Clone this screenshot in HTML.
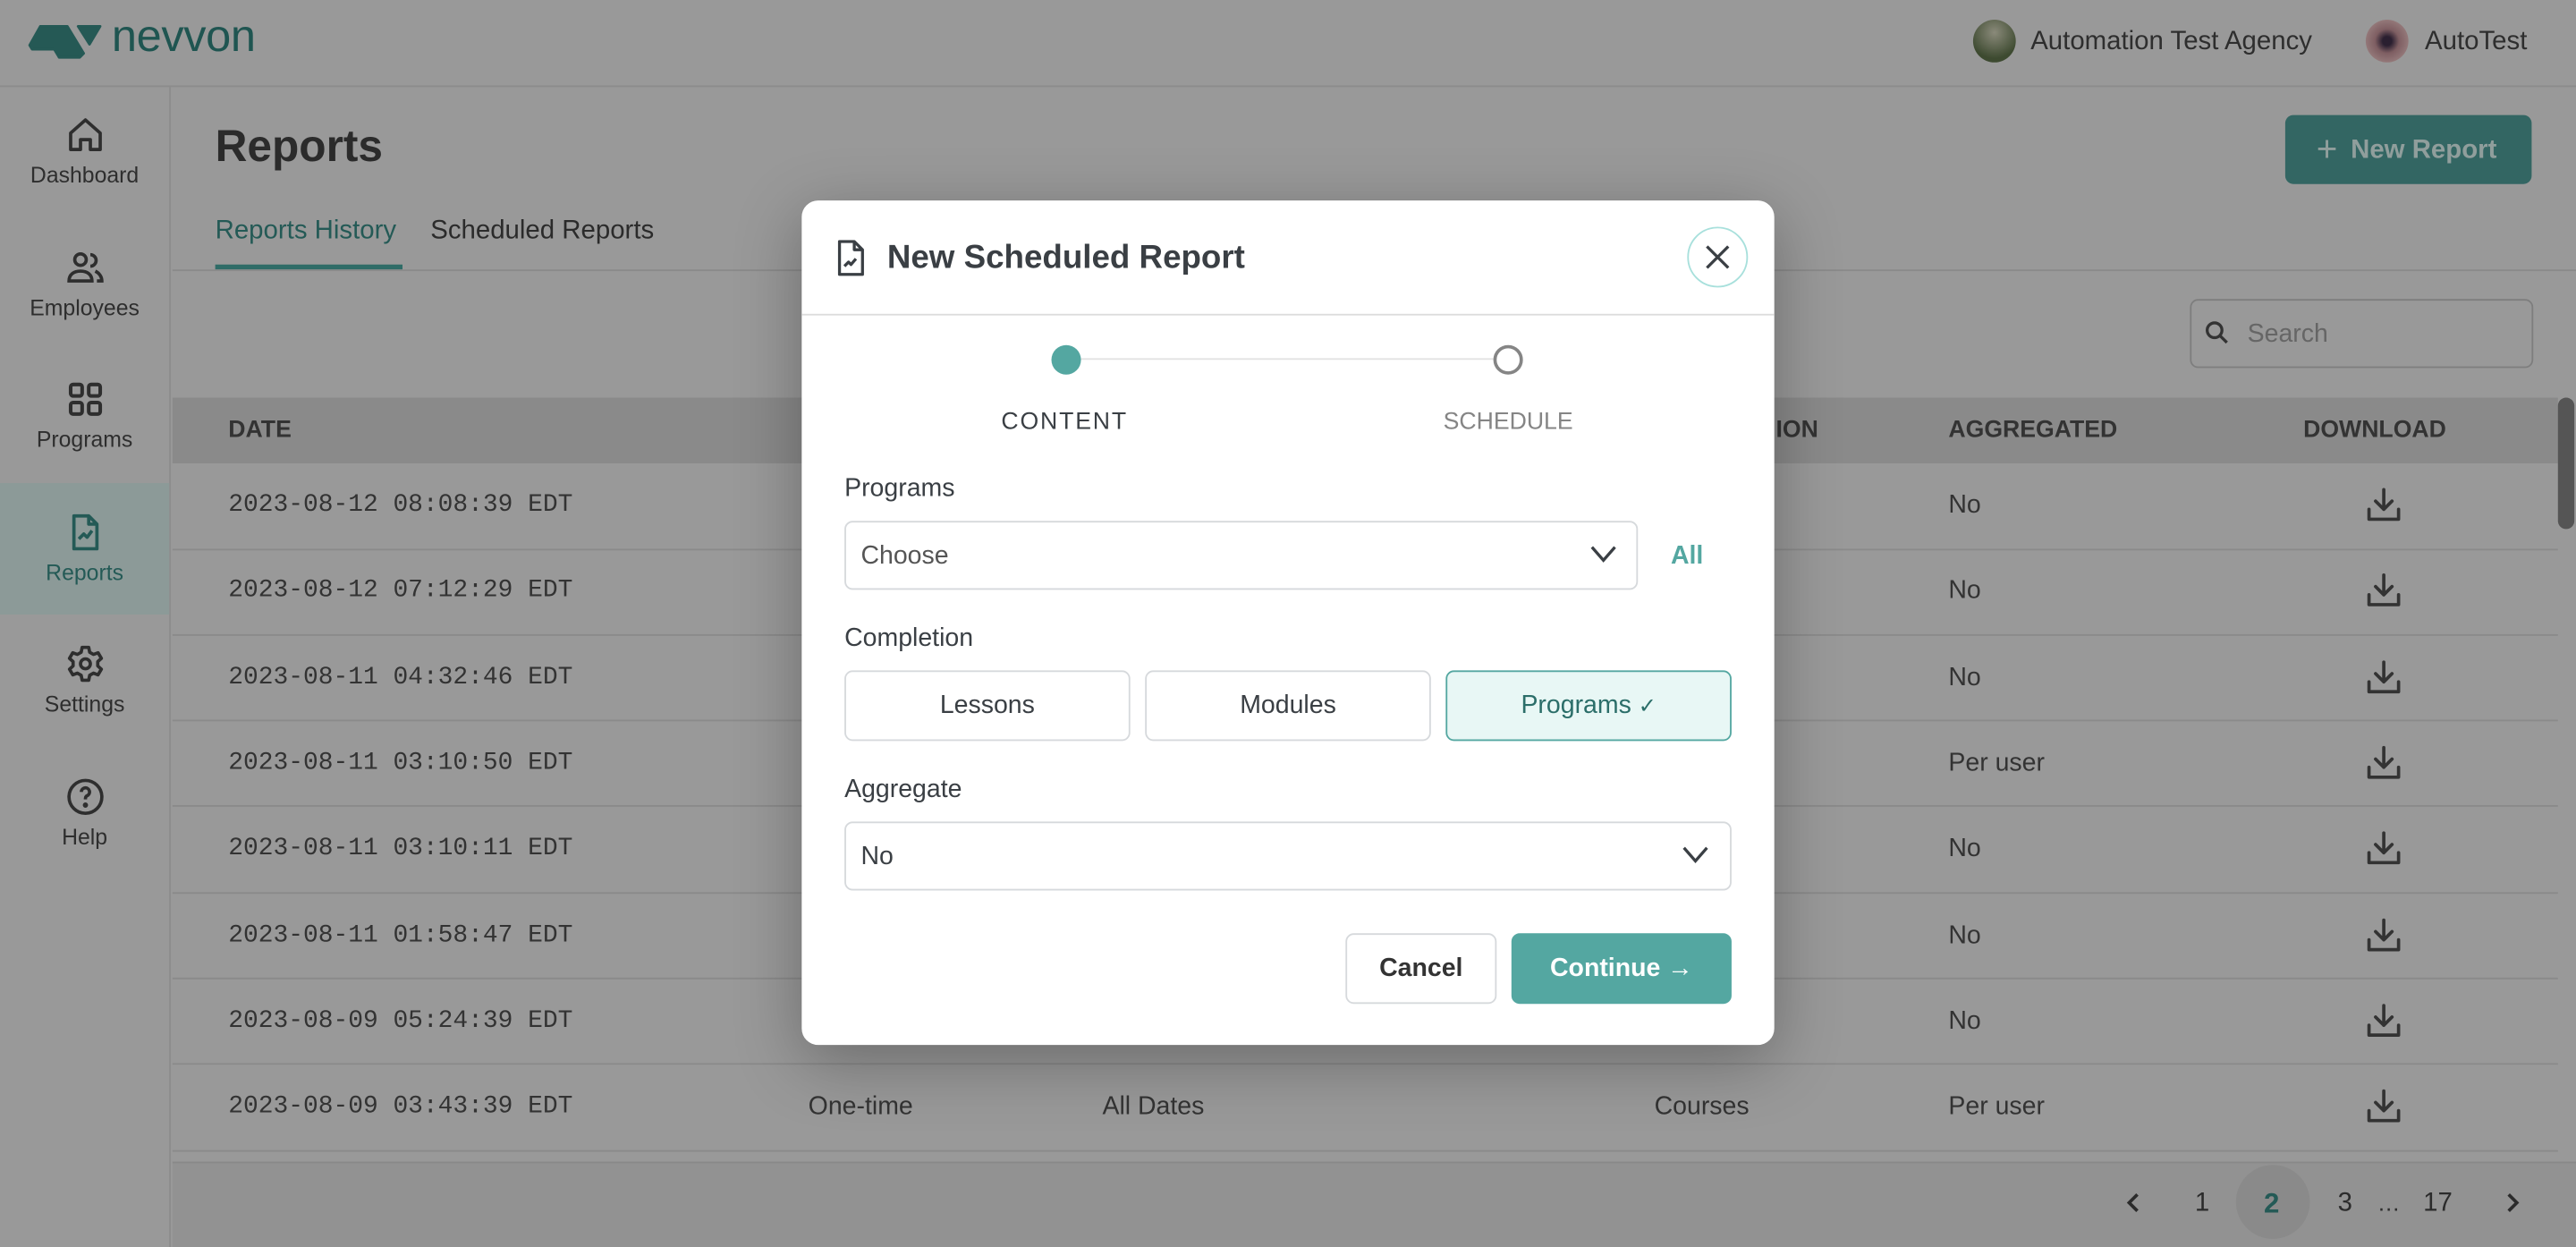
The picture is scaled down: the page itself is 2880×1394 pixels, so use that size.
<!DOCTYPE html>
<html><head><meta charset="utf-8">
<style>
*{box-sizing:border-box;margin:0;padding:0}
html,body{width:2880px;height:1394px;overflow:hidden;background:#999}
#w{position:absolute;left:0;top:0;width:1568px;height:759px;transform:scale(1.836735);transform-origin:0 0;font-family:"Liberation Sans",sans-serif;color:#333;background:#999}
.a{position:absolute}
.side{left:0;top:53px;width:104px;height:706px;border-right:1px solid #8c8c8c}
.nav{position:absolute;left:0;width:103px;text-align:center;font-size:13.5px;color:#2e2e2e}
.nav svg{display:block;margin:0 auto 5px}
.mono{font-family:"Liberation Mono",monospace;font-size:15.2px;color:#333}
.row{position:absolute;left:105px;width:1452px;height:1px;background:#8a8a8a}
.cell{position:absolute;font-size:15.5px;color:#333}
.dl{position:absolute}
.modal{left:488px;top:122px;width:592px;height:514px;background:#fff;border-radius:10px;box-shadow:0 10px 40px rgba(0,0,0,.3)}
.lbl{position:absolute;font-size:15.5px;color:#3a3f44}
.box{position:absolute;border:1.5px solid #d6d9dc;border-radius:5px;background:#fff}
</style></head><body><div id="w">
<!-- header -->
<svg class="a" style="left:0;top:0" width="70" height="52"><polygon points="24.5,16 41,16 51,32.5 48.5,35 36,35 33,30 19.5,30 18,27.5" fill="#255955" stroke="#255955" stroke-width="1.5" stroke-linejoin="round"/><polygon points="47.5,16 61,16 54.5,27" fill="#255955" stroke="#255955" stroke-width="1.5" stroke-linejoin="round"/></svg>
<div class="a" style="left:68px;top:6px;font-size:27.5px;color:#1f5551;letter-spacing:-0.2px">nevvon</div>
<div class="a" style="left:1201px;top:12px;width:26px;height:26px;border-radius:50%;background:radial-gradient(circle at 50% 30%,#8a8a7a,#3d4a30 70%)"></div>
<div class="a" style="left:1236px;top:17px;font-size:16px;color:#2e2e2e">Automation Test Agency</div>
<div class="a" style="left:1440px;top:12px;width:26px;height:26px;border-radius:50%;background:radial-gradient(circle,#2a1f30 15%,#7e5e62 40%,#9a8080 80%)"></div>
<div class="a" style="left:1476px;top:17px;font-size:16px;color:#2e2e2e">AutoTest</div>
<div class="a" style="left:0;top:52px;width:1568px;height:1px;background:#8c8c8c"></div>
<!-- sidebar -->
<div class="a side"></div>
<div class="a" style="left:0;top:294px;width:103px;height:80px;background:#8c9a98"></div>
<div class="nav" style="top:70px"><svg width="24" height="24" viewBox="0 0 24 24" fill="none" stroke="#2e2e2e" stroke-width="2" stroke-linejoin="round"><path d="M3 11 12 3l9 8v10h-6v-6H9v6H3z"/></svg>Dashboard</div>
<div class="nav" style="top:151px"><svg width="24" height="24" viewBox="0 0 24 24" fill="none" stroke="#2e2e2e" stroke-width="2"><circle cx="9" cy="7" r="3.5"/><path d="M2 20c0-4 3-6 7-6s7 2 7 6z"/><path d="M15 4a3.5 3.5 0 0 1 0 7M18 14c2 1 4 3 4 6h-3"/></svg>Employees</div>
<div class="nav" style="top:231px"><svg width="24" height="24" viewBox="0 0 24 24" fill="none" stroke="#2e2e2e" stroke-width="2.2"><rect x="3" y="3" width="7" height="7" rx="1.5"/><rect x="14" y="3" width="7" height="7" rx="1.5"/><rect x="3" y="14" width="7" height="7" rx="1.5"/><rect x="14" y="14" width="7" height="7" rx="1.5"/></svg>Programs</div>
<div class="nav" style="top:312px;color:#245a56"><svg width="24" height="24" viewBox="0 0 24 24" fill="none" stroke="#245a56" stroke-width="2" stroke-linejoin="round"><path d="M5 2h9l5 5v15H5z"/><path d="M14 2v5h5"/><path d="m8 16 3-3 2 2 3-4"/></svg>Reports</div>
<div class="nav" style="top:392px"><svg width="24" height="24" viewBox="0 0 24 24" fill="none" stroke="#2e2e2e" stroke-width="2" stroke-linejoin="round"><circle cx="12" cy="12" r="3"/><path d="M10 2h4l.6 3 2.3 1.3 2.8-1 2 3.4-2.2 2v2.6l2.2 2-2 3.4-2.8-1-2.3 1.3-.6 3h-4l-.6-3-2.3-1.3-2.8 1-2-3.4 2.2-2v-2.6l-2.2-2 2-3.4 2.8 1L9.4 5z"/></svg>Settings</div>
<div class="nav" style="top:473px"><svg width="24" height="24" viewBox="0 0 24 24" fill="none" stroke="#2e2e2e" stroke-width="2"><circle cx="12" cy="12" r="10"/><path d="M9.5 9a2.5 2.5 0 1 1 3.5 2.3c-.8.4-1 1-1 1.7v.5"/><circle cx="12" cy="17" r=".6" fill="#2e2e2e"/></svg>Help</div>
<!-- main -->
<div class="a" style="left:131px;top:74px;font-size:27px;font-weight:bold;color:#2b2b2b">Reports</div>
<div class="a" style="left:131px;top:132px;font-size:16px;color:#245a56">Reports History</div>
<div class="a" style="left:262px;top:132px;font-size:16px;color:#2b2b2b">Scheduled Reports</div>
<div class="a" style="left:131px;top:161px;width:114px;height:3px;background:#2f6c67"></div>
<div class="a" style="left:105px;top:164px;width:1463px;height:1px;background:#8a8a8a"></div>
<div class="a" style="left:1391px;top:70px;width:150px;height:42px;background:#336663;border-radius:5px;color:#909e9c;font-weight:bold;font-size:16px;line-height:42px;padding-left:19px"><span style="font-weight:normal;font-size:22px;vertical-align:-2px;margin-right:8px">+</span>New Report</div>
<div class="a" style="left:1333px;top:182px;width:209px;height:42px;border:1px solid #7e7e7e;border-radius:5px"></div>
<svg class="a" style="left:1341px;top:194px" width="18" height="18" viewBox="0 0 18 18" fill="none" stroke="#333" stroke-width="1.8"><circle cx="7" cy="7" r="4.5"/><path d="m10.5 10.5 4 4"/></svg>
<div class="a" style="left:1368px;top:195px;font-size:15.5px;color:#666">Search</div>
<!-- table -->
<div class="a" style="left:105px;top:242px;width:1452px;height:40px;background:#8a8a8a"></div>
<div class="a" style="left:139px;top:254px;font-size:14.5px;font-weight:bold;color:#333">DATE</div>
<div class="a" style="left:1081px;top:254px;font-size:14.5px;font-weight:bold;color:#333">ION</div>
<div class="a" style="left:1186px;top:254px;font-size:14.5px;font-weight:bold;color:#333">AGGREGATED</div>
<div class="a" style="left:1402px;top:254px;font-size:14.5px;font-weight:bold;color:#333">DOWNLOAD</div>
<div class="a" style="left:1557px;top:242px;width:10px;height:80px;background:#555;border-radius:5px"></div>
<div class="a" style="left:105px;top:707px;width:1463px;height:52px;background:#929292;border-top:1px solid #888"></div>
<svg class="a" style="left:1291px;top:724px" width="16" height="16" viewBox="0 0 16 16" fill="none" stroke="#2b2b2b" stroke-width="2"><path d="M10 3 5 8l5 5"/></svg>
<div class="a" style="left:1336px;top:724px;font-size:16px;color:#2b2b2b">1</div>
<div class="a" style="left:1361px;top:709px;width:45px;height:45px;border-radius:50%;background:#8a8a8a"></div>
<div class="a" style="left:1378px;top:723px;font-size:17px;font-weight:bold;color:#245a56">2</div>
<div class="a" style="left:1423px;top:724px;font-size:16px;color:#2b2b2b">3</div>
<div class="a" style="left:1447px;top:724px;font-size:14px;color:#2b2b2b">…</div>
<div class="a" style="left:1475px;top:724px;font-size:16px;color:#2b2b2b">17</div>
<svg class="a" style="left:1521px;top:724px" width="16" height="16" viewBox="0 0 16 16" fill="none" stroke="#2b2b2b" stroke-width="2"><path d="m6 3 5 5-5 5"/></svg>
<!-- modal -->
<div class="a modal">
 <svg class="a" style="left:20px;top:24px" width="20" height="22" viewBox="0 0 20 22" fill="none" stroke="#3a3f44" stroke-width="1.8" stroke-linejoin="round"><path d="M3 1h9l5 5v15H3z"/><path d="M12 1v5h5"/><path d="m6 16 2.5-2.5 1.5 1.5 3-3.5"/></svg>
 <div class="a" style="left:52px;top:24px;font-size:20px;font-weight:bold;color:#3a3f44">New Scheduled Report</div>
 <div class="a" style="left:539px;top:16px;width:37px;height:37px;border:1.5px solid #a8e0dc;border-radius:50%"></div>
 <svg class="a" style="left:548px;top:25px" width="19" height="19" viewBox="0 0 19 19" stroke="#3a3f44" stroke-width="1.8"><path d="M3 3l13 13M16 3 3 16"/></svg>
 <div class="a" style="left:0;top:69px;width:592px;height:1px;background:#dcdcdc"></div>
 <div class="a" style="left:161px;top:96px;width:270px;height:1px;background:#e2e2e2"></div>
 <div class="a" style="left:152px;top:88px;width:18px;height:18px;border-radius:50%;background:#54a7a1"></div>
 <div class="a" style="left:421px;top:88px;width:18px;height:18px;border-radius:50%;border:2px solid #858585;background:#fff"></div>
 <div class="a" style="left:100px;top:127px;width:120px;text-align:center;font-size:14.5px;letter-spacing:1px;color:#3a3f44">CONTENT</div>
 <div class="a" style="left:370px;top:127px;width:120px;text-align:center;font-size:14.5px;color:#858585">SCHEDULE</div>
 <div class="lbl" style="left:26px;top:167px">Programs</div>
 <div class="box" style="left:26px;top:195px;width:483px;height:42px"></div>
 <div class="a" style="left:36px;top:208px;font-size:15.5px;color:#555">Choose</div>
 <svg class="a" style="left:479px;top:208px" width="18" height="14" viewBox="0 0 18 14" fill="none" stroke="#3a3f44" stroke-width="1.8"><path d="m2 3 7 8 7-8"/></svg>
 <div class="a" style="left:529px;top:208px;font-size:15.5px;font-weight:bold;color:#54a7a1">All</div>
 <div class="lbl" style="left:26px;top:258px">Completion</div>
 <div class="box" style="left:26px;top:286px;width:174px;height:43px;text-align:center;line-height:42px;font-size:15.5px;color:#3a3f44">Lessons</div>
 <div class="box" style="left:209px;top:286px;width:174px;height:43px;text-align:center;line-height:42px;font-size:15.5px;color:#3a3f44">Modules</div>
 <div class="box" style="left:392px;top:286px;width:174px;height:43px;text-align:center;line-height:42px;font-size:15.5px;color:#2b6e69;background:#e8f7f5;border-color:#54a7a1">Programs <span style="font-size:13px">✓</span></div>
 <div class="lbl" style="left:26px;top:350px">Aggregate</div>
 <div class="box" style="left:26px;top:378px;width:540px;height:42px"></div>
 <div class="a" style="left:36px;top:391px;font-size:15.5px;color:#3a3f44">No</div>
 <svg class="a" style="left:535px;top:391px" width="18" height="14" viewBox="0 0 18 14" fill="none" stroke="#3a3f44" stroke-width="1.8"><path d="m2 3 7 8 7-8"/></svg>
 <div class="box" style="left:331px;top:446px;width:92px;height:43px;text-align:center;line-height:42px;font-size:15.5px;font-weight:bold;color:#333">Cancel</div>
 <div class="a" style="left:432px;top:446px;width:134px;height:43px;border-radius:5px;background:#54a7a1;color:#fff;text-align:center;line-height:43px;font-size:15.5px;font-weight:bold">Continue <span style="font-weight:normal">→</span></div>
</div>
</div>
<script>
var d=[["2023-08-12 08:08:39 EDT","","","","No"],["2023-08-12 07:12:29 EDT","","","","No"],["2023-08-11 04:32:46 EDT","","","","No"],["2023-08-11 03:10:50 EDT","","","","Per user"],["2023-08-11 03:10:11 EDT","","","","No"],["2023-08-11 01:58:47 EDT","","","","No"],["2023-08-09 05:24:39 EDT","","","","No"],["2023-08-09 03:43:39 EDT","One-time","All Dates","Courses","Per user"]];
var h="";
for(var i=0;i<d.length;i++){var y=282+i*52.3,ty=y+17;
h+='<div class="row" style="top:'+(y+51.5)+'px"></div>';
h+='<div class="a mono" style="left:139px;top:'+(ty-1)+'px">'+d[i][0]+'</div>';
if(d[i][1])h+='<div class="cell" style="left:492px;top:'+ty+'px">'+d[i][1]+'</div><div class="cell" style="left:671px;top:'+ty+'px">'+d[i][2]+'</div><div class="cell" style="left:1007px;top:'+ty+'px">'+d[i][3]+'</div>';
h+='<div class="cell" style="left:1186px;top:'+ty+'px">'+d[i][4]+'</div>';
h+='<svg class="dl" style="left:1439px;top:'+(y+13)+'px" width="24" height="24" viewBox="0 0 24 24" fill="none" stroke="#333" stroke-width="2" stroke-linecap="round" stroke-linejoin="round"><path d="M12 3v12M7 10l5 5 5-5M3 15v6h18v-6"/></svg>';}
var m=document.querySelector('.modal');m.insertAdjacentHTML('beforebegin',h);
</script>
</body></html>
